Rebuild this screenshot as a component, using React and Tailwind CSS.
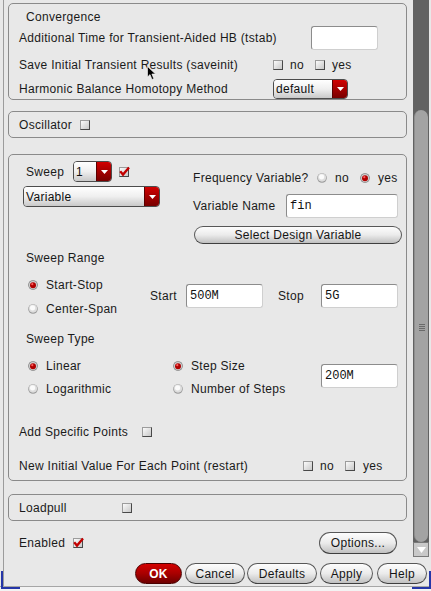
import React from "react";

const Checkbox = ({ checked }) => (
  <span className="relative inline-block w-[10px] h-[10px] shrink-0 border border-t-[#9c9c9c] border-l-[#9c9c9c] border-b-[#484848] border-r-[#484848] bg-gradient-to-br from-[#fbfbfb] to-[#c8c8c8]">
    {checked && (
      <svg className="absolute left-[-1px] top-[-2px]" width="11" height="11" viewBox="0 0 11 11">
        <path d="M1.2 5.2 L4 8.6 L10 1.4" stroke="#c20000" strokeWidth="2.3" fill="none" />
      </svg>
    )}
  </span>
);

const Radio = ({ checked }) =>
  checked ? (
    <svg width="10" height="10" viewBox="0 0 10 10" className="shrink-0">
      <circle cx="5" cy="5" r="4.8" fill="#7e7e7e" />
      <circle cx="5" cy="5" r="4" fill="#d0d0d0" />
      <circle cx="5" cy="5.2" r="3" fill="#b00000" />
      <circle cx="4.3" cy="4.2" r="1.1" fill="#ff5a5a" />
    </svg>
  ) : (
    <svg width="10" height="10" viewBox="0 0 10 10" className="shrink-0">
      <circle cx="5" cy="5" r="4.8" fill="#9a9a9a" />
      <circle cx="5" cy="4.6" r="4.1" fill="#dedede" />
      <circle cx="4.6" cy="3.8" r="2.6" fill="#fbfbfb" />
    </svg>
  );

const Dropdown = ({ w, h, label }) => (
  <div className={`flex ${w} ${h} shrink-0 rounded-[4px] border border-[#4c4c4c] overflow-hidden`}>
    <div className="flex-1 flex items-center pl-[2px] bg-gradient-to-b from-[#ffffff] via-[#efefef] to-[#c9c9c9] text-[#101010]">
      {label}
    </div>
    <div className="w-[15px] border-l border-[#5a0000] flex items-center justify-center bg-gradient-to-b from-[#d20000] to-[#780000]">
      <svg width="7" height="4" viewBox="0 0 7 4">
        <path d="M0 0 H7 L3.5 4 Z" fill="#ffffff" />
      </svg>
    </div>
  </div>
);

const Input = ({ w, value }) => (
  <div className={`${w} h-[24px] shrink-0 bg-white border border-t-[#8c8c8c] border-l-[#8c8c8c] border-b-[#cfcfcf] border-r-[#cfcfcf] rounded-[3px] flex items-center pl-[3px] font-['Liberation_Mono',monospace] text-[12px] tracking-normal text-[#111]`}>
    {value}
  </div>
);

const Btn = ({ w, h, children }) => (
  <div className={`${w} ${h} shrink-0 rounded-full border border-[#585858] border-b-[#3e3e3e] bg-gradient-to-b from-[#fdfdfd] via-[#ebebeb] to-[#c0c0c0] flex items-center justify-center text-[#151515]`}>
    {children}
  </div>
);

const Panel = ({ h, mt, children }) => (
  <div className={`w-[399px] ${h} ${mt} shrink-0 border border-[#8a8a8a] rounded-[5px] flex flex-col`}>
    {children}
  </div>
);

export default function App() {
  return (
    <div className="relative w-[431px] h-[591px] overflow-hidden bg-[#e8e8e8] text-[12px] leading-none tracking-[0.3px] text-[#1a1a1a] font-['Liberation_Sans',Arial,sans-serif] flex flex-col">
      <div className="flex h-[586px] shrink-0">
        <div className="w-[3px] shrink-0" />
        <div className="flex-1 border-l border-[#9c9c9c] flex flex-col">
          <div className="flex h-[557px] shrink-0">
            <div className="w-[409px] shrink-0 pl-[4px] pt-[3px] flex flex-col">
              {/* Convergence */}
              <Panel h="h-[97px]" mt="mt-0">
                <div className="h-[16px] mt-[5px] pl-[17px] flex items-center">Convergence</div>
                <div className="h-[23px] mt-[1px] pl-[10px] flex items-center">
                  <span className="w-[292px] shrink-0">Additional Time for Transient-Aided HB (tstab)</span>
                  <Input w="w-[67px]" value="" />
                </div>
                <div className="h-[18px] mt-[7px] pl-[10px] flex items-center">
                  <span className="w-[254px] shrink-0">Save Initial Transient Results (saveinit)</span>
                  <Checkbox />
                  <span className="ml-[7px]">no</span>
                  <span className="ml-[11px] flex"><Checkbox /></span>
                  <span className="ml-[7px]">yes</span>
                </div>
                <div className="h-[20px] mt-[5px] pl-[10px] flex items-center">
                  <span className="w-[254px] shrink-0">Harmonic Balance Homotopy Method</span>
                  <Dropdown w="w-[75px]" h="h-[20px]" label="default" />
                </div>
              </Panel>

              {/* Oscillator */}
              <Panel h="h-[27px]" mt="mt-[11px]">
                <div className="h-full pl-[10px] flex items-center">
                  <span className="w-[61px] shrink-0">Oscillator</span>
                  <Checkbox />
                </div>
              </Panel>

              {/* Sweep */}
              <Panel h="h-[327px]" mt="mt-[16px]">
                <div className="flex items-start">
                  <div className="w-[184px] shrink-0 pl-[14px] pt-[6px] flex flex-col">
                    <div className="h-[21px] flex items-center">
                      <span className="ml-[3px] w-[47px] shrink-0">Sweep</span>
                      <Dropdown w="w-[39px]" h="h-[21px]" label="1" />
                      <span className="ml-[7px] flex"><Checkbox checked /></span>
                    </div>
                    <div className="mt-[4px] flex">
                      <Dropdown w="w-[137px]" h="h-[21px]" label="Variable" />
                    </div>
                  </div>
                  <div className="w-[213px] shrink-0 pt-[15px] flex flex-col">
                    <div className="h-[16px] flex items-center">
                      <span className="w-[124px] shrink-0">Frequency Variable?</span>
                      <Radio />
                      <span className="ml-[8px]">no</span>
                      <span className="ml-[11px] flex"><Radio checked /></span>
                      <span className="ml-[8px]">yes</span>
                    </div>
                    <div className="h-[23px] mt-[8px] flex items-center">
                      <span className="w-[93px] shrink-0">Variable Name</span>
                      <Input w="w-[112px]" value="fin" />
                    </div>
                    <div className="mt-[9px] ml-[1px] flex">
                      <Btn w="w-[208px]" h="h-[18px]">Select Design Variable</Btn>
                    </div>
                  </div>
                </div>

                <div className="h-[16px] mt-[6px] pl-[17px] flex items-center">Sweep Range</div>

                <div className="h-[40px] mt-[11px] flex">
                  <div className="w-[141px] shrink-0 pl-[19px] flex flex-col gap-[8px]">
                    <div className="h-[16px] flex items-center">
                      <Radio checked />
                      <span className="ml-[8px]">Start-Stop</span>
                    </div>
                    <div className="h-[16px] flex items-center">
                      <Radio />
                      <span className="ml-[8px]">Center-Span</span>
                    </div>
                  </div>
                  <div className="mt-[7px] h-[24px] flex items-center">
                    <span className="w-[36px] shrink-0">Start</span>
                    <Input w="w-[77px]" value="500M" />
                    <span className="ml-[15px] w-[43px] shrink-0">Stop</span>
                    <Input w="w-[77px]" value="5G" />
                  </div>
                </div>

                <div className="h-[16px] mt-[14px] pl-[17px] flex items-center">Sweep Type</div>

                <div className="mt-[11px] flex">
                  <div className="w-[164px] shrink-0 pl-[19px] flex flex-col gap-[7px]">
                    <div className="h-[16px] flex items-center">
                      <Radio checked />
                      <span className="ml-[8px]">Linear</span>
                    </div>
                    <div className="h-[16px] flex items-center">
                      <Radio />
                      <span className="ml-[8px]">Logarithmic</span>
                    </div>
                  </div>
                  <div className="w-[148px] shrink-0 flex flex-col gap-[7px]">
                    <div className="h-[16px] flex items-center">
                      <Radio checked />
                      <span className="ml-[8px]">Step Size</span>
                    </div>
                    <div className="h-[16px] flex items-center">
                      <Radio />
                      <span className="ml-[8px]">Number of Steps</span>
                    </div>
                  </div>
                  <div className="mt-[6px] flex">
                    <Input w="w-[77px]" value="200M" />
                  </div>
                </div>

                <div className="h-[16px] mt-[27px] pl-[10px] flex items-center">
                  <span className="w-[123px] shrink-0">Add Specific Points</span>
                  <Checkbox />
                </div>

                <div className="h-[16px] mt-[18px] pl-[10px] flex items-center">
                  <span className="w-[284px] shrink-0">New Initial Value For Each Point (restart)</span>
                  <Checkbox />
                  <span className="ml-[7px]">no</span>
                  <span className="ml-[11px] flex"><Checkbox /></span>
                  <span className="ml-[8px]">yes</span>
                </div>
              </Panel>

              {/* Loadpull */}
              <Panel h="h-[27px]" mt="mt-[13px]">
                <div className="h-full pl-[10px] flex items-center">
                  <span className="w-[103px] shrink-0">Loadpull</span>
                  <Checkbox />
                </div>
              </Panel>

              {/* Enabled row */}
              <div className="w-[399px] h-[23px] mt-[10px] pl-[11px] pr-[10px] flex items-center">
                <span className="w-[54px] shrink-0">Enabled</span>
                <Checkbox checked />
                <div className="ml-auto flex">
                  <Btn w="w-[78px]" h="h-[22px]">Options...</Btn>
                </div>
              </div>
            </div>

            {/* Scrollbar */}
            <div className="w-[16px] shrink-0 bg-[#626262] flex flex-col">
              <div className="h-[110px] shrink-0" />
              <div className="h-[432px] shrink-0 mx-[1px] rounded-[7px] bg-[#a3a3a3] border-l border-[#8e8e8e] flex items-center justify-center">
                <div className="flex flex-col gap-[1px] mt-[2px]">
                  <div className="w-[6px] h-[1px] bg-[#6a6a6a]" />
                  <div className="w-[6px] h-[1px] bg-[#6a6a6a]" />
                  <div className="w-[6px] h-[1px] bg-[#6a6a6a]" />
                  <div className="w-[6px] h-[1px] bg-[#6a6a6a]" />
                </div>
              </div>
              <div className="h-[15px] shrink-0 bg-[#c9c9c9] border border-[#7a7a7a] flex items-center justify-center">
                <svg width="9" height="6" viewBox="0 0 9 6">
                  <path d="M0 0 H9 L4.5 6 Z" fill="#ffffff" />
                </svg>
              </div>
            </div>
            <div className="w-[2px] shrink-0" />
          </div>

          {/* Button row */}
          <div className="h-[21px] mt-[6px] pr-[4px] flex justify-end">
            <div className="w-[47px] h-[21px] rounded-full border border-[#4a0000] bg-gradient-to-b from-[#d40000] via-[#a80000] to-[#6e0000] flex items-center justify-center text-white font-bold">
              OK
            </div>
            <div className="ml-[3px] flex"><Btn w="w-[60px]" h="h-[21px]">Cancel</Btn></div>
            <div className="ml-[2px] flex"><Btn w="w-[70px]" h="h-[21px]">Defaults</Btn></div>
            <div className="ml-[3px] flex"><Btn w="w-[53px]" h="h-[21px]">Apply</Btn></div>
            <div className="ml-[4px] flex"><Btn w="w-[50px]" h="h-[21px]">Help</Btn></div>
          </div>
        </div>
      </div>
      <div className="flex-1 border-t border-[#a6a6a6] bg-[#f3f3f3]" />

      {/* window selection corners */}
      <div className="absolute left-[1px] top-[571px] w-[19px] h-[18px] border-l-2 border-b-2 border-[#2536a8]" />
      <div className="absolute right-0 top-[571px] w-[19px] h-[18px] border-r-2 border-b-2 border-[#2536a8]" />

      {/* mouse cursor */}
      <svg className="absolute left-[147px] top-[66px]" width="10" height="15" viewBox="0 0 10 15">
        <path d="M0.5 0.5 L0.5 11 L3 8.6 L5 13.5 L6.8 12.7 L4.9 8 L8.5 8 Z" fill="#000000" stroke="#ffffff" strokeWidth="0.6" />
      </svg>
    </div>
  );
}
